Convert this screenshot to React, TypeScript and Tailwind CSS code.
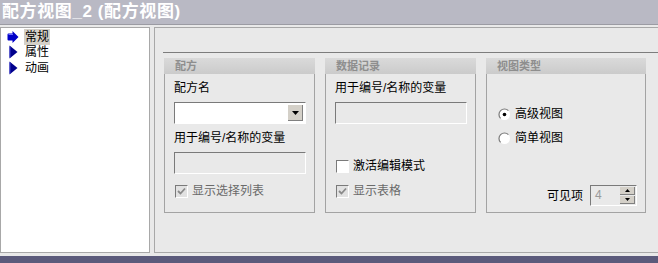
import type { ReactNode } from 'react';

const font = { fontFamily: '"Liberation Sans", "Noto Sans CJK SC", sans-serif' };

// classic sunken field frame
const sunken = 'border-t border-l border-t-[#7a7a7a] border-l-[#7a7a7a] border-b border-r border-b-white border-r-white';

const GroupBox = ({ title, children, wide }: { title: string; children: ReactNode; wide?: boolean }) => (
  <div className={`flex flex-col h-[155px] border-x border-b border-[#a3a3a3] ${wide ? 'w-[160px]' : 'w-[151px]'}`}>
    <div className="h-[16px] -mx-px pl-[11px] bg-gradient-to-b from-[#dadada] to-[#cbcbcb] text-[11px] leading-[16px] font-bold text-[#8e8e8e]">
      {title}
    </div>
    <div className="flex flex-col flex-1 px-[9px]">{children}</div>
  </div>
);

const CheckBox = ({ checked, disabled, label, className = '' }: { checked?: boolean; disabled?: boolean; label: string; className?: string }) => (
  <div className={`flex items-center h-[16px] ${className}`}>
    <div className={`flex items-center justify-center w-[13px] h-[13px] ml-px ${sunken} ${disabled ? 'bg-[#e2e2e2]' : 'bg-white'}`}>
      {checked && (
        <svg width="9" height="9" viewBox="0 0 9 9">
          <path d="M1 4 L3.5 6.5 L8 1.5" stroke={disabled ? '#8a8a8a' : '#000'} strokeWidth="1.8" fill="none" />
        </svg>
      )}
    </div>
    <span className={`ml-[4px] text-[12px] ${disabled ? 'text-[#6a6a6a]' : 'text-black'}`}>{label}</span>
  </div>
);

const Radio = ({ checked, label, className = '' }: { checked?: boolean; label: string; className?: string }) => (
  <div className={`flex items-center h-[16px] ${className}`}>
    <svg width="13" height="13" viewBox="0 0 13 13" className="ml-[2px]">
      <circle cx="6.5" cy="6.5" r="5.5" fill="#fff" />
      <path d="M2.6 10.4 A5.5 5.5 0 0 1 10.4 2.6" stroke="#7a7a7a" strokeWidth="1.2" fill="none" />
      {checked && <circle cx="6.5" cy="6.5" r="1.8" fill="#000" />}
    </svg>
    <span className="ml-[4px] text-[12px] text-black">{label}</span>
  </div>
);

const Arrow = ({ big }: { big?: boolean }) =>
  big ? (
    <svg width="12" height="14" viewBox="0 0 12 14">
      <path d="M0.5 4.5 Q0.5 3.5 1.5 3.5 H5.5 V1 L11.5 7 L5.5 13 V10.5 H1.5 Q0.5 10.5 0.5 9.5 Z" fill="#0000c8" />
      <path d="M1.5 4.5 H6" stroke="#6a6aff" strokeWidth="1" />
    </svg>
  ) : (
    <svg width="9" height="14" viewBox="0 0 9 14">
      <path d="M0.5 0.5 L8.5 7 L0.5 13.5 Z" fill="#00008c" />
      <path d="M1 1.5 V12.5" stroke="#3a3ad0" strokeWidth="1" />
    </svg>
  );

const TreeItem = ({ label, selected }: { label: string; selected?: boolean }) => (
  <div className="flex items-center h-[15.5px]">
    <div className="flex justify-center w-[14px] ml-[5px]">
      <Arrow big={selected} />
    </div>
    <span className={`ml-[4px] px-[1px] text-[12px] leading-[16px] text-black ${selected ? 'bg-[#d4d0c8]' : ''}`}>{label}</span>
  </div>
);

export default function App() {
  return (
    <div className="flex flex-col w-[658px] h-[263px] bg-[#e9e9e9] overflow-hidden" style={font}>
      {/* title bar */}
      <div className="flex items-center h-[25px] pl-[2px] bg-[#b9b9c4] border-b border-[#9b9ba3]">
        <span className="text-[17px] font-bold text-white tracking-[0.6px]">配方视图_2 (配方视图)</span>
      </div>

      <div className="flex mt-[2px] h-[226px]">
        {/* tree */}
        <div className="w-[150px] pt-[1px] bg-white border border-[#a8a8a8]">
          <TreeItem label="常规" selected />
          <TreeItem label="属性" />
          <TreeItem label="动画" />
        </div>

        {/* property panel */}
        <div className="flex-1 ml-[4px] border-l border-t border-b border-[#a8a8a8]">
          <div className="ml-[8px] mt-[24px] border-t border-[#7d7d7d]" />
          <div className="flex gap-[10px] ml-[9px] mt-[5px]">
            <GroupBox title="配方">
              <span className="mt-[6px] text-[12px] leading-[16px]">配方名</span>
              <div className={`flex mt-[6px] h-[22px] w-[132px] bg-white ${sunken}`}>
                <div className="flex-1" />
                <div className="flex items-center justify-center w-[15px] my-[2px] mr-[2px] bg-[#d4d0c8] border-b border-r border-[#808080]">
                  <svg width="7" height="4" viewBox="0 0 7 4">
                    <path d="M0 0 H7 L3.5 4 Z" fill="#000" />
                  </svg>
                </div>
              </div>
              <span className="mt-[6px] text-[12px] leading-[16px]">用于编号/名称的变量</span>
              <div className={`mt-[6px] h-[22px] w-[132px] bg-[#e9e9e9] ${sunken}`} />
              <CheckBox checked disabled label="显示选择列表" className="mt-[9px]" />
            </GroupBox>

            <GroupBox title="数据记录">
              <span className="mt-[6px] text-[12px] leading-[16px]">用于编号/名称的变量</span>
              <div className={`mt-[6px] h-[22px] w-[132px] bg-[#e9e9e9] ${sunken}`} />
              <CheckBox label="激活编辑模式" className="mt-[34px]" />
              <CheckBox checked disabled label="显示表格" className="mt-[9px]" />
            </GroupBox>

            <GroupBox title="视图类型" wide>
              <Radio checked label="高级视图" className="mt-[32px]" />
              <Radio label="简单视图" className="mt-[8px]" />
              <div className="flex items-center justify-end gap-[7px] mt-[39px] -mr-[1px]">
                <span className="text-[12px]">可见项</span>
                <div className={`flex w-[47px] h-[21px] bg-[#e9e9e9] ${sunken}`}>
                  <span className="flex-1 pl-[4px] text-[12px] leading-[19px] text-[#9a9a9a]">4</span>
                  <div className="flex flex-col w-[15px] my-[1px] mr-[1px] gap-px">
                    <div className="flex flex-1 items-center justify-center bg-[#d4d0c8] border-b border-r border-[#808080]">
                      <svg width="5" height="3" viewBox="0 0 5 3">
                        <path d="M0 3 H5 L2.5 0 Z" fill="#000" />
                      </svg>
                    </div>
                    <div className="flex flex-1 items-center justify-center bg-[#d4d0c8] border-b border-r border-[#808080]">
                      <svg width="5" height="3" viewBox="0 0 5 3">
                        <path d="M0 0 H5 L2.5 3 Z" fill="#000" />
                      </svg>
                    </div>
                  </div>
                </div>
              </div>
            </GroupBox>
          </div>
        </div>
      </div>

      <div className="mt-[3px] h-[7px] bg-[#5b5a7b]" />
    </div>
  );
}
